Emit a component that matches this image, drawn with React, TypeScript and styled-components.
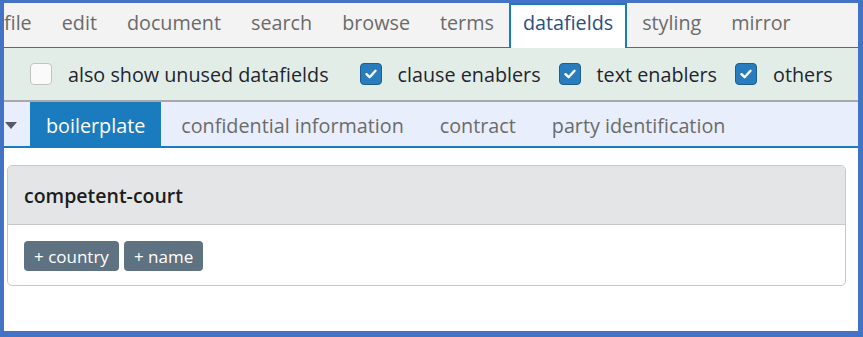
import React from 'react';
import styled, { createGlobalStyle } from 'styled-components';

const GlobalStyle = createGlobalStyle`
  html, body {
    margin: 0;
    padding: 0;
    background: #ffffff;
  }

  body {
    font-family: 'Open Sans', 'Noto Sans', sans-serif;
  }
`;

const Frame = styled.div`
  width: 863px;
  height: 337px;
  box-sizing: border-box;
  border-style: solid;
  border-color: #4472c4;
  border-width: 3px 5px 6px 4px;
  background: #ffffff;
  overflow: hidden;
  display: flex;
  flex-direction: column;
`;

const MenuBar = styled.nav`
  display: flex;
  flex-shrink: 0;
  height: 44px;
  background: #f3f3f3;
  border-bottom: 1px solid #1a7bbf;
`;

const MenuItem = styled.div<{ $active?: boolean }>`
  display: flex;
  align-items: center;
  box-sizing: border-box;
  padding: 0 ${(p) => (p.$active ? '12px' : '13px')} 8px;
  font-size: 19.75px;
  white-space: nowrap;
  color: ${(p) => (p.$active ? '#2b4f7e' : '#6b6b6b')};
  background: ${(p) => (p.$active ? '#ffffff' : 'transparent')};
  border: 2px solid ${(p) => (p.$active ? '#1a7bbf' : 'transparent')};
  border-bottom: none;
  margin-bottom: ${(p) => (p.$active ? '-1px' : '0')};

  &:first-child {
    padding-left: 0;
    border-left: none;
  }
`;

const FilterRow = styled.div`
  display: flex;
  flex-shrink: 0;
  align-items: center;
  height: 52px;
  padding-left: 26px;
  background: #e3ede7;
  border-bottom: 2px solid #a9a9a9;
`;

const CheckLabel = styled.label`
  display: flex;
  align-items: center;
  gap: 16px;
  margin-right: 18px;
  font-size: 19.75px;
  white-space: nowrap;
  color: #1f2530;

  &:first-child {
    margin-right: 31px;
  }
`;

const Box = styled.span<{ $checked?: boolean }>`
  display: flex;
  align-items: center;
  justify-content: center;
  width: 22px;
  height: 22px;
  box-sizing: border-box;
  border-radius: 4px;
  border: 1px solid ${(p) => (p.$checked ? '#1c5d93' : '#c2c2c2')};
  background: ${(p) => (p.$checked ? '#2a7dbd' : '#fafafa')};
`;

const TabRow = styled.div`
  display: flex;
  flex-shrink: 0;
  align-items: stretch;
  height: 44px;
  background: #e8eefc;
  border-bottom: 2px solid #1a7bbf;
`;

const Caret = styled.div`
  display: flex;
  align-items: center;
  width: 26px;
  padding-left: 1px;
  padding-top: 4px;
  box-sizing: border-box;
`;

const Tab = styled.div<{ $active?: boolean }>`
  display: flex;
  align-items: center;
  padding: ${(p) => (p.$active ? '3px 16px 0' : '3px 18px 0')};
  font-size: 19.75px;
  white-space: nowrap;
  color: ${(p) => (p.$active ? '#ffffff' : '#6b6b6b')};
  background: ${(p) => (p.$active ? '#1a7bbf' : 'transparent')};
  margin-right: ${(p) => (p.$active ? '2px' : '0')};
`;

const Card = styled.section`
  margin: 17px 12px 0 3px;
  border: 1px solid #c9c9c9;
  border-radius: 5px;
  overflow: hidden;
`;

const CardHeader = styled.header`
  display: flex;
  align-items: center;
  height: 58px;
  padding: 0 16px;
  background: #e4e5e7;
  border-bottom: 1px solid #c9c9c9;
  font-size: 19.5px;
  font-weight: 600;
  color: #1d1d1d;
`;

const CardBody = styled.div`
  display: flex;
  gap: 5px;
  padding: 16px 16px 14px;
`;

const Badge = styled.span`
  display: flex;
  align-items: center;
  height: 30px;
  padding: 0 10px;
  border-radius: 4px;
  background: #5f7282;
  color: #ffffff;
  font-size: 17px;
  white-space: nowrap;
`;

const menu = ['file', 'edit', 'document', 'search', 'browse', 'terms', 'datafields', 'styling', 'mirror'];
const filters = [
  { label: 'also show unused datafields', checked: false },
  { label: 'clause enablers', checked: true },
  { label: 'text enablers', checked: true },
  { label: 'others', checked: true },
];
const tabs = ['boilerplate', 'confidential information', 'contract', 'party identification'];

const App = () => {
  return (
    <>
      <GlobalStyle />
      <Frame>
        <MenuBar>
          {menu.map((m) => (
            <MenuItem key={m} $active={m === 'datafields'}>
              {m}
            </MenuItem>
          ))}
        </MenuBar>
        <FilterRow>
          {filters.map((f) => (
            <CheckLabel key={f.label}>
              <Box $checked={f.checked}>
                {f.checked && (
                  <svg width='14' height='14' viewBox='0 0 14 14'>
                    <path d='M2.5 7.2 L5.6 10.2 L11.5 3.8' fill='none' stroke='#fff' strokeWidth='2.4' strokeLinecap='round' strokeLinejoin='round' />
                  </svg>
                )}
              </Box>
              {f.label}
            </CheckLabel>
          ))}
        </FilterRow>
        <TabRow>
          <Caret>
            <svg width='12' height='8' viewBox='0 0 12 8'>
              <path d='M0 0 L12 0 L6 7 Z' fill='#555b63' />
            </svg>
          </Caret>
          {tabs.map((t) => (
            <Tab key={t} $active={t === 'boilerplate'}>
              {t}
            </Tab>
          ))}
        </TabRow>
        <Card>
          <CardHeader>competent-court</CardHeader>
          <CardBody>
            <Badge>+ country</Badge>
            <Badge>+ name</Badge>
          </CardBody>
        </Card>
      </Frame>
    </>
  );
};

export default App;
